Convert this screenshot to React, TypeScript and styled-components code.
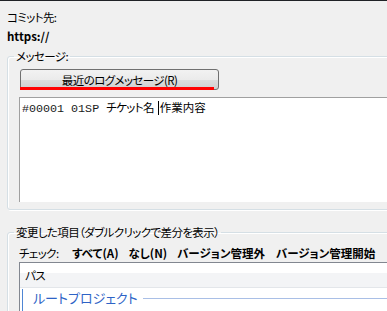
import styled, { createGlobalStyle } from "styled-components";

const GlobalStyle = createGlobalStyle`
  html, body {
    margin: 0;
    padding: 0;
    background: #f0f0f0;
    overflow: hidden;
  }
  body {
    font-family: "Noto Sans CJK JP", "Liberation Sans", sans-serif;
    font-size: 11.5px;
    letter-spacing: -0.6px;
    font-feature-settings: "palt";
    color: #000;
  }
`;

const Window = styled.div`
  width: 387px;
  height: 311px;
  box-sizing: border-box;
  overflow: hidden;
  border-top: 1px solid #1f2226;
  padding: 8px 0 0 7px;
  background: #f0f0f0;
`;

const Inner = styled.div`
  width: 440px;
  display: flex;
  flex-direction: column;
`;

const Label = styled.div`
  line-height: 16px;
`;

const Url = styled.div`
  margin-top: 3px;
  line-height: 16px;
  font-weight: bold;
  letter-spacing: 0;
`;

const Group = styled.fieldset<{ $top: number }>`
  margin: ${(p) => p.$top}px 0 0 0;
  padding: 6px 0 7px 11px;
  border: 1px solid #d5dfe5;
  border-radius: 3px;
  box-shadow: inset 1px 1px 0 #fff, 1px 1px 0 #fff;
  min-width: 0;
`;

const Legend = styled.legend`
  margin-left: -5px;
  padding: 0 2px;
  line-height: 14px;
`;

const ButtonWrap = styled.div`
  position: relative;
  margin-left: 1px;
  width: 199px;

  &::after {
    content: "";
    position: absolute;
    left: 0;
    bottom: 0;
    width: 194px;
    height: 3px;
    background: #ff0000;
  }
`;

const Button = styled.button`
  display: block;
  width: 199px;
  height: 21px;
  padding: 0;
  border: 1px solid #707070;
  border-radius: 3px;
  background: linear-gradient(#f2f2f2 0%, #ebebeb 50%, #dddddd 51%, #cfcfcf 100%);
  font: inherit;
  letter-spacing: inherit;
  color: #000;
  line-height: 18px;
`;

const Editor = styled.div`
  margin-top: 7px;
  height: 102px;
  border-top: 1px solid #a0a0a0;
  border-left: 1px solid #a0a0a0;
  background: #fff;
  padding: 2px 0 0 2px;
  line-height: 15px;
  white-space: pre;
`;

const Mono = styled.span`
  font-family: "Liberation Mono", monospace;
  font-size: 11.7px;
  letter-spacing: 0;
  color: #1a1a1a;
`;

const Caret = styled.span`
  display: inline-block;
  width: 1px;
  height: 14px;
  margin: 0 1px 0 4px;
  background: #000;
  vertical-align: -3px;
`;

const Content = styled.span`
  letter-spacing: 0;
`;

const CheckRow = styled.div`
  display: flex;
  align-items: center;
  line-height: 16px;
`;

const CheckLabel = styled.span`
  width: 53px;
`;

const CheckLink = styled.span<{ $gap: number }>`
  font-weight: bold;
  letter-spacing: 0;
  margin-right: ${(p) => p.$gap}px;
`;

const List = styled.div`
  margin-top: 1px;
  height: 60px;
  border-top: 1px solid #828790;
  border-left: 1px solid #828790;
  background: #fff;
  display: flex;
  flex-direction: column;
`;

const Header = styled.div`
  height: 24px;
  padding-left: 5px;
  line-height: 24px;
  background: linear-gradient(#ffffff 0%, #ffffff 42%, #f3f4f6 43%, #f3f4f6 100%);
  border-bottom: 1px solid #e3e6ea;
`;

const GroupRow = styled.div`
  flex: 1;
  margin: 1px 0 0 2px;
  padding: 1px 0 0 10px;
  border-left: 1px solid #4f86d4;
  display: flex;
  align-items: flex-start;
  gap: 5px;
  color: #2e63c6;
  font-size: 13px;
  letter-spacing: 0;
  line-height: 16px;
`;

const GroupLine = styled.div`
  flex: 1;
  margin-top: 8px;
  height: 1px;
  background: #a9bfe6;
`;

export default function App() {
  return (
    <>
      <GlobalStyle />
      <Window>
        <Inner>
          <Label>コミット先:</Label>
          <Url>https://</Url>

          <Group $top={5}>
            <Legend>メッセージ:</Legend>
            <ButtonWrap>
              <Button type="button">最近のログメッセージ(R)</Button>
            </ButtonWrap>
            <Editor>
              <Mono>#00001 01SP </Mono>
              チケット名
              <Caret />
              <Content>作業内容</Content>
            </Editor>
          </Group>

          <Group $top={15}>
            <Legend>変更した項目（ダブルクリックで差分を表示）</Legend>
            <CheckRow>
              <CheckLabel>チェック:</CheckLabel>
              <CheckLink $gap={10}>すべて(A)</CheckLink>
              <CheckLink $gap={10}>なし(N)</CheckLink>
              <CheckLink $gap={11}>バージョン管理外</CheckLink>
              <CheckLink $gap={0}>バージョン管理開始</CheckLink>
            </CheckRow>
            <List>
              <Header>パス</Header>
              <GroupRow>
                ルートプロジェクト
                <GroupLine />
              </GroupRow>
            </List>
          </Group>
        </Inner>
      </Window>
    </>
  );
}
